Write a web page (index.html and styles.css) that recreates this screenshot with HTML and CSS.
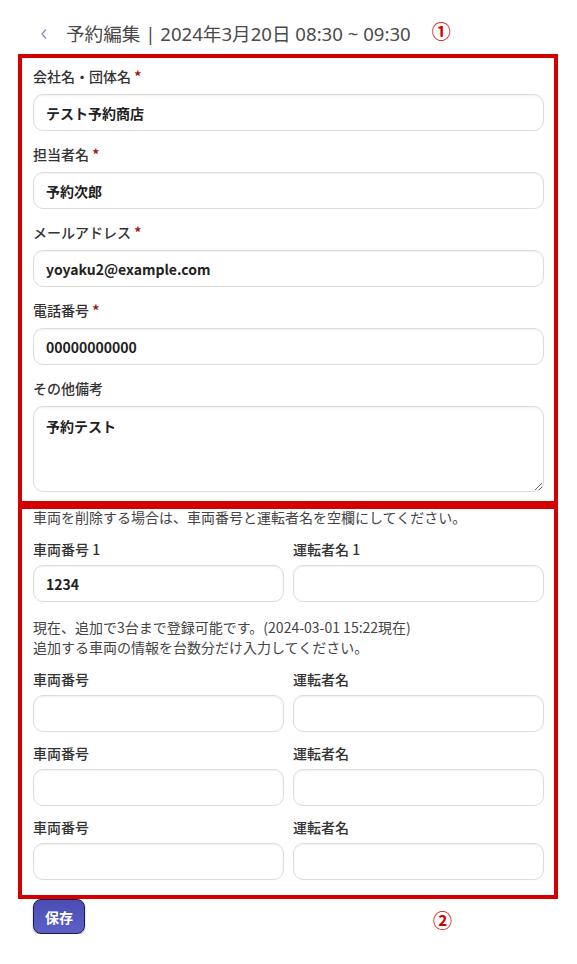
FILE: index.html
```html
<!DOCTYPE html>
<html lang="ja">
<head>
<meta charset="utf-8">
<title>予約編集</title>
<link rel="stylesheet" href="styles.css">
</head>
<body>
<div class="page">
  <div class="header">
    <span class="back">
      <svg width="8" height="12" viewBox="0 0 8 12"><path d="M6 1.5 L2 6 L6 10.5" fill="none" stroke="#8c8cc8" stroke-width="1.4"/></svg>
    </span>
    <h1 class="title">予約編集 | 2024年3月20日 08:30 ~ 09:30</h1>
    <span class="mark mark-1">①</span>
  </div>

  <div class="box box-1">
    <div class="field">
      <label class="label">会社名・団体名 <span class="req">*</span></label>
      <input class="input" type="text" value="テスト予約商店">
    </div>
    <div class="field">
      <label class="label">担当者名 <span class="req">*</span></label>
      <input class="input" type="text" value="予約次郎">
    </div>
    <div class="field">
      <label class="label">メールアドレス <span class="req">*</span></label>
      <input class="input" type="text" value="yoyaku2@example.com">
    </div>
    <div class="field">
      <label class="label">電話番号 <span class="req">*</span></label>
      <input class="input" type="text" value="00000000000">
    </div>
    <div class="field field-last">
      <label class="label">その他備考</label>
      <textarea class="input textarea">予約テスト</textarea>
    </div>
  </div>

  <div class="box box-2">
    <p class="note note-top">車両を削除する場合は、車両番号と運転者名を空欄にしてください。</p>
    <div class="row">
      <div class="col">
        <label class="label">車両番号 1</label>
        <input class="input" type="text" value="1234">
      </div>
      <div class="col">
        <label class="label">運転者名 1</label>
        <input class="input" type="text" value="">
      </div>
    </div>
    <p class="note note-mid">現在、追加で3台まで登録可能です。(2024-03-01 15:22現在)<br>追加する車両の情報を台数分だけ入力してください。</p>
    <div class="row">
      <div class="col">
        <label class="label">車両番号</label>
        <input class="input" type="text" value="">
      </div>
      <div class="col">
        <label class="label">運転者名</label>
        <input class="input" type="text" value="">
      </div>
    </div>
    <div class="row">
      <div class="col">
        <label class="label">車両番号</label>
        <input class="input" type="text" value="">
      </div>
      <div class="col">
        <label class="label">運転者名</label>
        <input class="input" type="text" value="">
      </div>
    </div>
    <div class="row">
      <div class="col">
        <label class="label">車両番号</label>
        <input class="input" type="text" value="">
      </div>
      <div class="col">
        <label class="label">運転者名</label>
        <input class="input" type="text" value="">
      </div>
    </div>
  </div>

  <div class="footer">
    <button class="save" type="button">保存</button>
    <span class="mark mark-2">②</span>
  </div>
</div>
</body>
</html>
```

FILE: styles.css
```css
* { box-sizing: border-box; }

html, body {
  margin: 0;
  padding: 0;
  background: #ffffff;
}

body {
  font-family: "Noto Sans CJK JP", "Noto Sans", sans-serif;
  color: #333333;
}

.page {
  width: 577px;
}

.header {
  display: flex;
  align-items: flex-start;
  height: 54px;
  padding-top: 21px;
  padding-left: 40px;
}

.back {
  display: flex;
  align-items: center;
  width: 26px;
  height: 26px;
}

.title {
  margin: 0;
  font-family: "Noto Sans", "Noto Sans CJK JP", sans-serif;
  font-size: 18.6px;
  font-weight: 400;
  color: #4a4a4a;
  line-height: 26px;
  letter-spacing: 0;
}

.mark {
  font-family: "Noto Sans CJK JP", sans-serif;
  color: #d40000;
  font-weight: 700;
  font-size: 19px;
  line-height: 20px;
}

.mark-1 {
  margin-left: 21px;
  margin-top: 0;
}

.box {
  margin-left: 18px;
  width: 540px;
  border: 4px solid #d40000;
  padding: 0 10px 0 11px;
}

.box-1 {
  padding-top: 8px;
  padding-bottom: 9px;
}

.box-2 {
  padding-top: 0;
  padding-bottom: 15px;
}

.field {
  display: flex;
  flex-direction: column;
  margin-bottom: 13px;
}

.field-last {
  margin-bottom: 0;
}

.label {
  display: block;
  font-size: 14px;
  font-weight: 500;
  line-height: 20px;
  color: #333333;
  margin-bottom: 8px;
}

.req {
  color: #a31515;
  font-weight: 700;
}

.input {
  display: block;
  width: 100%;
  height: 37px;
  border: 1px solid #dcdcdc;
  border-radius: 10px;
  background: #ffffff;
  box-shadow: inset 0 1px 2px rgba(0, 0, 0, 0.06);
  padding: 0 12px;
  font-family: "Noto Sans CJK JP", "Noto Sans", sans-serif;
  font-size: 14px;
  font-weight: 700;
  color: #222222;
  outline: none;
}

.textarea {
  height: 86px;
  padding: 9px 12px;
  line-height: 20px;
  resize: vertical;
}

.note {
  margin: 0;
  font-size: 14px;
  line-height: 20px;
  color: #444444;
}

.note-top {
  margin-top: -2px;
}

.note-mid {
  margin-top: 15px;
}

.row {
  display: grid;
  grid-template-columns: 1fr 1fr;
  column-gap: 9px;
  margin-top: 11px;
}

.note + .row {
  margin-top: 12px;
}

.col .label {
  margin-bottom: 6px;
}

.footer {
  display: flex;
  align-items: flex-start;
}

.save {
  margin-left: 33px;
  margin-top: 0;
  width: 52px;
  height: 35px;
  border: 1px solid #1c1c45;
  border-radius: 8px;
  background: linear-gradient(#4a4db4, #5b5fc6);
  box-shadow: 0 1px 2px rgba(0, 0, 0, 0.35);
  color: #ffffff;
  font-family: "Noto Sans CJK JP", "Noto Sans", sans-serif;
  font-size: 14px;
  font-weight: 700;
  padding: 0;
}

.mark-2 {
  margin-left: 348px;
  margin-top: 11px;
}
```
